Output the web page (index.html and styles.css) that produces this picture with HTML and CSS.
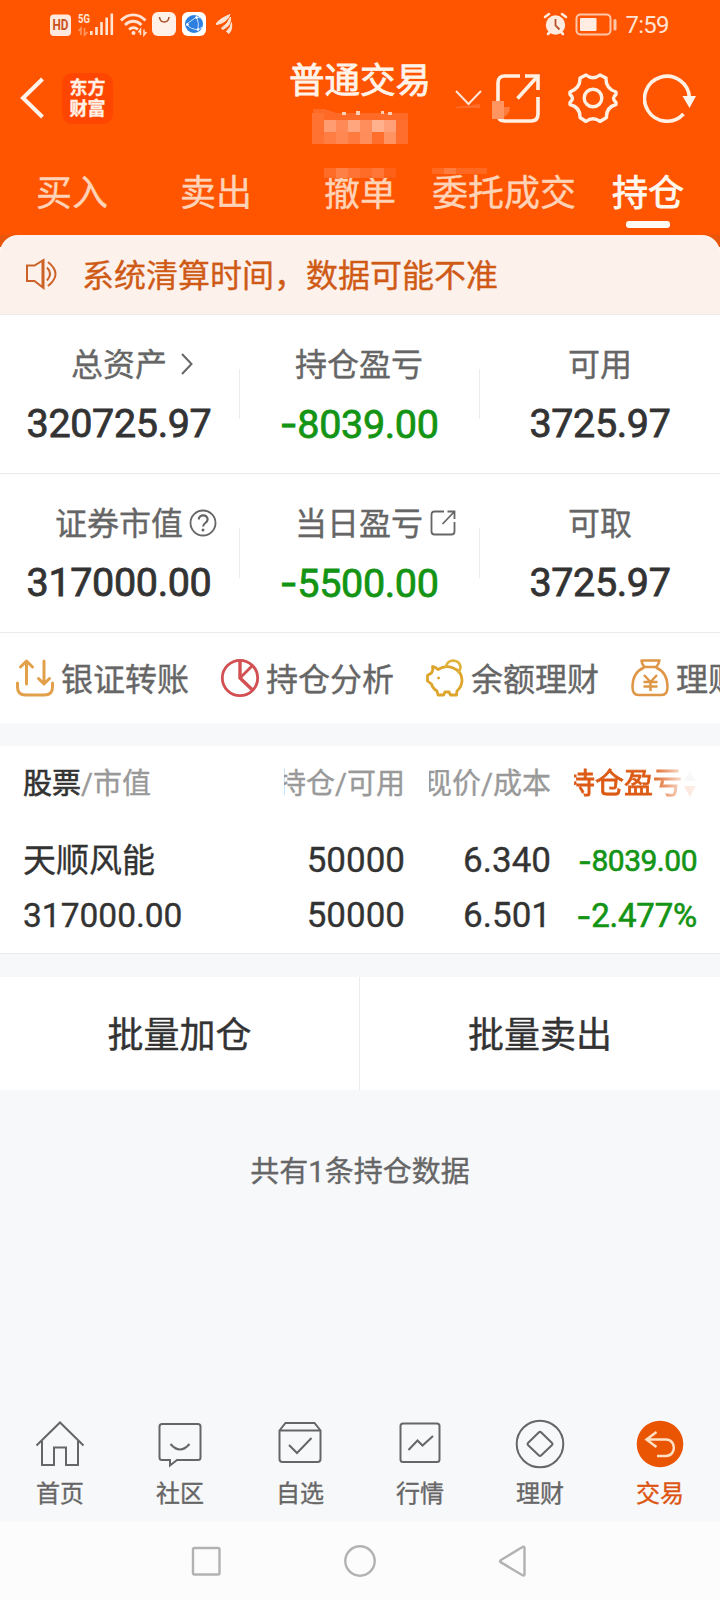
FILE: index.html
```html
<!DOCTYPE html>
<html lang="zh-CN">
<head>
  <meta charset="UTF-8" />
  <meta name="viewport" content="width=device-width, initial-scale=1.0"/>
  <title>普通交易 - 持仓</title>
  <link rel="stylesheet" href="styles.css">
</head>
<body>
  <div class="top">
    <!-- Phone status bar -->
    <div class="status">
      <svg class="status-left" width="190" height="26" viewBox="48 11 190 26">
        <rect x="50" y="14.500" width="21" height="21.500" rx="4" fill="#ffe9dd"/>
        <text x="60.500" y="30" class="hd" textLength="16" lengthAdjust="spacingAndGlyphs">HD</text>
        <text x="78" y="23" class="net" textLength="12" lengthAdjust="spacingAndGlyphs">5G</text>
        <path d="M81 35v-7l-2.500 3M84.500 28v7l3-3" stroke="#ff9a68" stroke-width="1.500" fill="none"/>
        <path d="M91.300 31v4M96.500 27v8M101.500 22v13M106.700 17.500v17.500M111.800 13.500v21.500" stroke="#ffe3d3" stroke-width="2.600"/>
        <g fill="none" stroke="#ffe3d3" stroke-width="2.800">
          <path d="M121 20.500c7-7.500 17.500-7.500 24.500 0"/>
          <path d="M125 25c5-5 11.500-5 16.500 0"/>
          <path d="M129 29.500c3-2.500 6-2.500 9 0"/>
        </g>
        <circle cx="133.500" cy="33" r="2" fill="#ffe3d3"/>
        <path d="M140.500 35v-5.500l-2 3M144 29.500v5.500l2.500-3" stroke="#ffe3d3" stroke-width="1.500" fill="none"/>
        <rect x="152" y="12" width="24" height="24" rx="6" fill="#fff0e8"/>
        <path d="M159.500 17c.5 6.500 9 6.500 9.500 0" stroke="#a8502c" stroke-width="1.500" fill="none"/>
        <rect x="182" y="12" width="24" height="24" rx="6" fill="#fff"/>
        <circle cx="194" cy="24" r="9" fill="#2f7fe0"/>
        <path d="M186 24.500l10.500-7.500M186 24.500q5 5 12 5.500M196.500 17q3 6 1.500 13M198 30l4-3M196.500 17l4 1" stroke="#c8e2ff" stroke-width="1" fill="none"/>
        <circle cx="196.500" cy="17.500" r="1.300" fill="#fff"/><circle cx="198" cy="29.500" r="1.300" fill="#fff"/><circle cx="187.500" cy="24.500" r="1.300" fill="#fff"/>
        <path d="M216 24q3-5 14-9.500-3 8-13 10zM221.500 28q6.500-4 9-11 1 9-8 12.500zM226.500 31.500q4.500-4 5-9 1 7-2.500 11z" fill="#ffe3d3" stroke="#ffe3d3" stroke-width="1"/>
      </svg>
      <svg class="status-right" width="130" height="26" viewBox="542 11 130 26">
        <circle cx="555.500" cy="25" r="9.700" fill="#ffebe0"/>
        <path d="M545 17l4-3M566 17l-4-3M548 34l2-2M563 34l-2-2" stroke="#ffebe0" stroke-width="2.600" stroke-linecap="round"/>
        <path d="M555.500 19v6.500l4 4" stroke="#b5532a" stroke-width="1.800" fill="none"/>
        <rect x="576.500" y="14.500" width="34" height="20" rx="4" fill="none" stroke="#ffc7a8" stroke-width="2"/>
        <rect x="580" y="18" width="16.500" height="13" rx="1" fill="#ffede4"/>
        <path d="M615 20.500v8.500" stroke="#ffc7a8" stroke-width="3" stroke-linecap="round"/>
        <text x="625.500" y="32.500" class="clock" textLength="44">7:59</text>
      </svg>
    </div>

    <header class="header">
      <div class="header-left">
        <svg width="24" height="42" viewBox="0 0 24 42"><path d="M22.500 2L3 21l19.500 19" fill="none" stroke="#fff4ec" stroke-width="4"/></svg>
        <div class="logo">东方<br>财富</div>
      </div>
      <div class="title">
        <h1>普通交易</h1>
        <!-- masked account name -->
        <svg class="mosaic" width="96" height="36" viewBox="0 0 96 36" shape-rendering="crispEdges">
          <path d="M1 1h11l12 4h72v7H1z" fill="#ff6a26"/>
          <path d="M30 4h4v3h-4zM44 3h4v4h-4zM69 3h3v3h-3zM76 4h4v3h-4z" fill="#ffd0b4"/>
          <rect x="0" y="5" width="12" height="31" fill="#ff7232"/>
          <rect x="12" y="12" width="84" height="24" fill="#ff6e2c"/>
          <rect x="12" y="12" width="12" height="12" fill="#ff9c72"/>
          <rect x="24" y="12" width="12" height="12" fill="#ff8a58"/>
          <rect x="36" y="12" width="12" height="12" fill="#ffa67e"/>
          <rect x="48" y="12" width="12" height="12" fill="#ff8e5c"/>
          <rect x="60" y="12" width="12" height="12" fill="#ffb08c"/>
          <rect x="72" y="12" width="12" height="12" fill="#ffa078"/>
          <rect x="12" y="24" width="12" height="12" fill="#ff7c42"/>
          <rect x="24" y="24" width="12" height="12" fill="#ff8852"/>
          <rect x="36" y="24" width="12" height="12" fill="#ff7a3e"/>
          <rect x="48" y="24" width="12" height="12" fill="#ff8d5c"/>
          <rect x="72" y="24" width="12" height="12" fill="#ff9462"/>
        </svg>
      </div>
      <div class="header-right">
        <svg class="chevron" width="27" height="20" viewBox="0 0 27 20"><path d="M1 1l12.500 13L26 1" fill="none" stroke="#ffe6d6" stroke-width="2"/><path d="M1 17l24-3v4H1z" fill="#ff6c2a"/></svg>
        <svg class="share" width="50" height="50" viewBox="0 0 50 50">
          <g fill="none" stroke="#fff0e4" stroke-width="3.600">
            <path d="M29 3H14Q7 3 7 10v31q0 7 7 7h26q7 0 7-7V24"/>
            <path d="M34 3h13v14M46 4L26.500 25.500"/>
          </g>
          <rect x="1" y="28" width="12" height="18" fill="#ff9560"/>
          <path d="M13 34h6q0 7-6 10z" fill="#ff7c3c"/>
        </svg>
        <svg class="gear" width="50" height="50" viewBox="0 0 50 50">
          <g fill="none" stroke="#fff0e4" stroke-width="3.400" stroke-linejoin="round">
            <path d="M18 2q7 5.500 14 0l6 3q-.5 10.500 10 14v2.500q-5 3.500 0 8v2q-10 3-9.500 13l-6.500 4q-7-5.500-14 0l-6-4q.5-10-10-13v-2q5-4.500 0-8V19q10.500-4 10-14z"/>
            <circle cx="25" cy="25" r="8.800"/>
          </g>
        </svg>
        <svg class="refresh" width="54" height="50" viewBox="0 0 54 50">
          <path d="M40.500 41A22.500 22.500 0 1 1 46.500 25" fill="none" stroke="#fff0e4" stroke-width="3.600"/>
          <path d="M39.500 23h13.500l-6.500 12z" fill="#fff4ec"/>
        </svg>
      </div>
    </header>

    <nav class="tabs">
      <span>买入</span>
      <span>卖出</span>
      <span>撤单</span>
      <span>委托成交</span>
      <span class="active">持仓</span>
      <i class="smudge smudge-a"></i>
      <i class="smudge smudge-b"></i>
    </nav>
  </div>

  <div class="notice-wrap">
    <div class="notice">
      <svg width="34" height="34" viewBox="0 0 34 34" fill="none" stroke="#cc6228" stroke-width="2">
        <path d="M2 9.500h7.500L18.500 4v28L9.500 25H2zM17.500 4v27"/>
        <path d="M22 11.500q6 6 0 13M23 6q15 12 0 24"/>
      </svg>
      <span>系统清算时间，数据可能不准</span>
    </div>
  </div>

  <section class="stats">
    <div class="stat">
      <div class="label">总资产<svg class="arrow" width="14" height="24" viewBox="0 0 14 24"><path d="M2 2l9.500 10L2 22" fill="none" stroke="#666" stroke-width="2"/></svg></div>
      <div class="value">320725.97</div>
    </div>
    <div class="stat">
      <div class="label">持仓盈亏</div>
      <div class="value green"><b>-</b>8039.00</div>
    </div>
    <div class="stat">
      <div class="label">可用</div>
      <div class="value">3725.97</div>
    </div>
  </section>
  <section class="stats">
    <div class="stat">
      <div class="label">证券市值<svg class="help" width="28" height="28" viewBox="0 0 28 28"><circle cx="14" cy="14" r="12.500" fill="none" stroke="#666" stroke-width="1.800"/><path d="M9.800 10.500c0-5.500 8.800-5.500 8.800 0 0 3.500-4.500 3.500-4.500 7" fill="none" stroke="#666" stroke-width="2.200"/><circle cx="14" cy="21" r="1.500" fill="#666"/></svg></div>
      <div class="value">317000.00</div>
    </div>
    <div class="stat">
      <div class="label">当日盈亏<svg class="open" width="26" height="26" viewBox="0 0 26 26" fill="none" stroke="#666" stroke-width="1.800"><path d="M14 1.500H4.500Q1.500 1.500 1.500 4.500v17q0 3 3 3h17q3 0 3-3V12"/><path d="M17.500 1.500h7V9M24 2L12.500 14"/></svg></div>
      <div class="value green"><b>-</b>5500.00</div>
    </div>
    <div class="stat">
      <div class="label">可取</div>
      <div class="value">3725.97</div>
    </div>
  </section>

  <div class="links">
    <div class="link">
      <svg width="40" height="40" viewBox="0 0 40 40" fill="none" stroke="#e2a04a" stroke-width="3" stroke-linecap="round" stroke-linejoin="round">
        <path d="M2.500 25v4q0 8 8 8h19q8 0 8-8v-4"/><path d="M11.500 26V3M5.500 9l6-6 6 6M29 3v23M23.500 20.500l5.500 5.500 5.500-5.500"/>
      </svg>
      <span>银证转账</span>
    </div>
    <div class="link">
      <svg width="40" height="40" viewBox="0 0 40 40" fill="none" stroke="#d25052" stroke-width="2.800">
        <circle cx="20" cy="20" r="17.700"/><path d="M20 2.500V20L32 31.500" stroke-width="3.400"/><path d="M20 20L32 8"/>
      </svg>
      <span>持仓分析</span>
    </div>
    <div class="link">
      <svg width="40" height="40" viewBox="0 0 40 40" fill="none" stroke="#dda52c" stroke-width="2.800" stroke-linejoin="round" stroke-linecap="round">
        <path d="M7.500 8.500q3 .5 5.500 3Q20 7 27 9.500q10 3.500 10 12.500 0 6.500-5 11l-.5 4h-6l-1.500-3h-4l-1.500 3h-5.500l-1-4q-4-2-5.500-7L2.500 23v-5.500l4-2.500q2-3 1-6.500z"/>
        <path d="M21 8.500c1.500-8 13-7.500 14.500 0 0 2.500-.5 4-2 5.500" stroke="#dfb33c"/><circle cx="13.500" cy="20" r="1" fill="#dda52c" stroke-width="1"/>
      </svg>
      <span>余额理财</span>
    </div>
    <div class="link">
      <svg width="40" height="40" viewBox="0 0 40 40" fill="none" stroke="#df9646" stroke-width="2.500" stroke-linejoin="round">
        <path d="M11.500 2.500h18q-1 4.500-3.500 6.500H15q-3-2-3.500-6.500zM14 9.500C6 13 2.500 20 2.500 29q0 8 6 8h23q6 0 6-8C37.500 20 34 13 26 9.500"/>
        <path d="M14 17l6.500 7 6.500-7M13.500 24h14M13.500 28.500h14M20.500 24v9"/>
      </svg>
      <span>理财产品</span>
    </div>
  </div>

  <section class="holdings">
    <div class="row head">
      <div class="c1"><strong>股票</strong>/市值</div>
      <div class="c2"><span>持仓/可用</span></div>
      <div class="c3"><span>现价/成本</span></div>
      <div class="c4"><span>持仓盈亏</span><svg width="14" height="26" viewBox="0 0 14 26"><path d="M1 10L7 0l6 10z" fill="#ccc"/><path d="M1 15h12L7 26z" fill="#e86018"/></svg></div>
    </div>
    <div class="row">
      <div class="c1 name">天顺风能</div>
      <div class="c2">50000</div>
      <div class="c3">6.340</div>
      <div class="c4 profit"><b>-</b>8039.00</div>
    </div>
    <div class="row last">
      <div class="c1 market">317000.00</div>
      <div class="c2">50000</div>
      <div class="c3">6.501</div>
      <div class="c4 rate"><b>-</b>2.477%</div>
    </div>
  </section>

  <div class="batch">
    <div>批量加仓</div>
    <div>批量卖出</div>
  </div>

  <p class="summary">共有1条持仓数据</p>

  <nav class="bottom">
    <div class="item">
      <svg width="50" height="50" viewBox="0 0 50 50"><path d="M1.500 26.500L25 3.500l23.500 23M7 22v24h12V28.500h12V46h12V22"/></svg>
      <span>首页</span>
    </div>
    <div class="item">
      <svg width="50" height="50" viewBox="0 0 50 50"><path d="M7 5h36q2.500 0 2.500 2.500v31Q45.500 41 43 41H22l-7 5.500V41H7q-2.500 0-2.500-2.500v-31Q4.500 5 7 5z"/><path d="M15.500 25q9.500 11 19 0"/></svg>
      <span>社区</span>
    </div>
    <div class="item">
      <svg width="50" height="50" viewBox="0 0 50 50"><path d="M4.500 11.500L10.500 4h29l6 7.500V40q0 3-3 3h-35q-3 0-3-3zM4.500 11.500h41"/><path d="M14 26l8 8 14.500-15"/></svg>
      <span>自选</span>
    </div>
    <div class="item">
      <svg width="50" height="50" viewBox="0 0 50 50"><rect x="5.500" y="4.500" width="39" height="38.500" rx="2.500"/><path d="M13.500 31l9-9.500 5 5L38 17" /></svg>
      <span>行情</span>
    </div>
    <div class="item">
      <svg width="50" height="50" viewBox="0 0 50 50"><circle cx="25" cy="25" r="23.300"/><path d="M23.700 13.500q1.300-1.300 2.600 0l10.500 10.200q1.300 1.300 0 2.600l-10.500 10q-1.300 1.300-2.600 0l-10.500-10q-1.300-1.300 0-2.600z"/></svg>
      <span>理财</span>
    </div>
    <div class="item active">
      <svg width="50" height="50" viewBox="0 0 50 50"><circle cx="25" cy="25" r="23.300" class="disc"/><path d="M21.500 13L11.500 20.500l10 7.500M12 20.500h19c10.500 0 10.500 16.500 0 16.500h-9"/></svg>
      <span>交易</span>
    </div>
  </nav>

  <div class="system">
    <svg width="32" height="32" viewBox="0 0 32 32"><rect x="3" y="3" width="26.500" height="26.500" rx="1.500"/></svg>
    <svg width="32" height="32" viewBox="0 0 32 32"><circle cx="16" cy="16" r="14.700"/></svg>
    <svg width="32" height="32" viewBox="0 0 32 32"><path d="M3 15q-2 1.200 0 2.400l21.500 12.800q2 1 2-1.200v-26q0-2-2-1z"/></svg>
  </div>
</body>
</html>
```

FILE: styles.css
```css
* {
  box-sizing: border-box;
}
body {
  margin: 0;
  width: 720px;
  height: 1600px;
  overflow: hidden;
  display: flex;
  flex-direction: column;
  font-family: Roboto, "Noto Sans CJK SC", sans-serif;
  background-color: #f7f8fa;
  color: #333;
  -webkit-text-stroke: 0.35px currentColor;
}
svg {
  display: block;
  flex: none;
}

/* orange header */
.top {
  height: 235px;
  background-color: #ff5500;
}
.status {
  height: 48px;
  padding: 11px 48px 0;
  display: flex;
  justify-content: space-between;
}
.status text {
  -webkit-text-stroke: 0;
}
.hd {
  font-size: 15px;
  font-weight: bold;
  fill: #c8501c;
  text-anchor: middle;
}
.net {
  font-size: 13px;
  font-weight: bold;
  fill: #ffe3d3;
}
.clock {
  font-size: 24px;
  fill: #ffe3d3;
}
.header {
  height: 100px;
  display: grid;
  grid-template-columns: 289px 142px 289px;
}
.header-left {
  display: flex;
  align-items: center;
  gap: 18px;
  padding-left: 20px;
}
.logo {
  width: 51px;
  height: 51px;
  border-radius: 10px;
  background-color: #ff4600;
  color: #fff0e6;
  font-family: "Noto Sans CJK SC", sans-serif;
  font-size: 18px;
  font-weight: bold;
  line-height: 21px;
  text-align: center;
  padding-top: 3px;
}
.title {
  padding-top: 15px;
}
.title h1 {
  margin: 0;
  font-size: 35.5px;
  font-weight: 400;
  line-height: 36px;
  color: #fff3ea;
  white-space: nowrap;
  -webkit-text-stroke-width: 0.8px;
}
.mosaic {
  margin: 9px auto 0 23px;
}
.header-right {
  display: flex;
  align-items: center;
  padding-left: 24px;
}
.chevron {
  margin-top: 4px;
}
.share {
  margin-left: 9px;
}
.gear {
  margin-left: 27px;
}
.refresh {
  margin-left: 25px;
}
.tabs {
  position: relative;
  height: 87px;
  display: grid;
  grid-template-columns: repeat(5, 1fr);
  text-align: center;
  font-size: 36px;
  line-height: 36px;
  color: #ffd3b8;
  padding-top: 28px;
}
.tabs .active {
  color: #fff8ef;
  -webkit-text-stroke-width: 0.8px;
}
.tabs .active::after {
  content: "";
  display: block;
  width: 44px;
  height: 7px;
  margin: 9px auto 0;
  border-radius: 3px;
  background-color: #fffaf2;
}
.smudge {
  position: absolute;
  top: 20px;
  height: 10px;
  background-color: #ff7434;
}
.smudge-a {
  left: 324px;
  width: 72px;
  background: linear-gradient(90deg, #ff6c28 12px, #ff8046 12px 24px, #ff7434 24px 36px, #ff6c28 36px 48px, #ff7636 48px 60px, #ff6018 60px);
}
.smudge-b {
  left: 432px;
  width: 55px;
  height: 6px;
  background: linear-gradient(90deg, #ff6922 12px, #ff7c3e 12px 24px, #ff6820 24px);
}

/* notice */
.notice-wrap {
  background: linear-gradient(#e8560c 12px, #fff 12px);
}
.notice {
  height: 80px;
  padding: 0 25px 3px;
  display: flex;
  align-items: center;
  gap: 23px;
  border-radius: 18px 18px 0 0;
  border-bottom: 1px solid #ecebed;
  background-color: #fdf1eb;
  font-size: 32px;
  color: #cf5a16;
}

/* account figures */
.stats {
  height: 159px;
  display: flex;
  background-color: #fff;
  border-bottom: 1px solid #ebebed;
}
.stat {
  width: 240px;
  padding-top: 34px;
  padding-right: 2px;
  display: flex;
  flex-direction: column;
  align-items: center;
  background: linear-gradient(#ececee, #ececee) no-repeat 239px 54px / 1px 50px;
}
.stat:last-child {
  padding-right: 0;
  background: none;
}
.label {
  display: flex;
  align-items: center;
  height: 32px;
  font-size: 32px;
  line-height: 32px;
  color: #666;
}
.label svg {
  margin-top: -2px;
}
.arrow {
  margin-left: 13px;
  margin-right: -27px;
}
.help {
  margin-left: 6px;
  margin-right: -34px;
}
.open {
  margin-left: 7px;
  margin-right: -33px;
}
.value {
  margin-top: 23px;
  font-size: 39.5px;
  line-height: 40px;
  letter-spacing: -0.35px;
  -webkit-text-stroke-width: 0.8px;
}
b {
  font-family: Inter, sans-serif;
  font-weight: inherit;
}
.green,
.profit,
.rate {
  color: #149414;
}

/* shortcut links */
.links {
  height: 91px;
  padding-left: 15px;
  display: flex;
  align-items: center;
  gap: 31px;
  overflow: hidden;
  background-color: #fff;
  border-bottom: 1px solid #fbfbfc;
}
.link {
  display: flex;
  align-items: center;
  gap: 6px;
  font-size: 32px;
  color: #666;
  white-space: nowrap;
}
.link span {
  margin-top: -2px;
}

/* holdings table */
.holdings {
  height: 208px;
  margin-top: 22px;
  background-color: #fff;
  border-bottom: 1px solid #ebebed;
}
.row {
  display: grid;
  grid-template-columns: 260px 121px 122px 123px;
  padding-left: 24px;
  height: 55px;
  align-items: center;
  font-size: 35px;
  line-height: 54px;
  white-space: nowrap;
}
.row > div {
  display: flex;
  justify-content: flex-end;
  align-items: center;
}
.row > .c1 {
  justify-content: flex-start;
  margin-left: -1px;
}
.c3,
.c4 {
  margin-left: 24px;
  margin-right: -24px;
}
.row > .c4 {
  margin-left: 47px;
  margin-right: -47px;
}
.head {
  height: 87px;
  padding-bottom: 12px;
  font-size: 29px;
  line-height: 40px;
  color: #999;
}
.head > div {
  overflow: hidden;
}
.head strong {
  font-weight: 400;
  color: #333;
  -webkit-text-stroke-width: 0.6px;
}
.head .c4 {
  color: #dc5a14;
  -webkit-text-stroke-width: 0.8px;
  -webkit-mask-image: linear-gradient(90deg, #000 76px, rgba(0, 0, 0, 0.15) 110px, rgba(0, 0, 0, 0.1));
  mask-image: linear-gradient(90deg, #000 76px, rgba(0, 0, 0, 0.15) 110px, rgba(0, 0, 0, 0.1));
}
.head svg {
  margin-left: 1px;
}
.name {
  font-size: 33px;
}
.market {
  font-size: 33.5px;
}
.profit {
  font-size: 30px;
  letter-spacing: -0.5px;
  -webkit-text-stroke-width: 0.6px;
}
.rate {
  font-size: 33px;
  letter-spacing: -0.2px;
  -webkit-text-stroke-width: 0.6px;
}

.batch {
  display: flex;
  height: 113px;
  margin-top: 23px;
  background-color: #fff;
}
.batch div {
  width: 360px;
  text-align: center;
  font-size: 36px;
  line-height: 119px;
}
.batch div:first-child {
  border-right: 1px solid #ececee;
}
.summary {
  margin: 62px 0 0;
  text-align: center;
  font-size: 29px;
  line-height: 40px;
  color: #666;
}

/* bottom navigation */
.bottom {
  margin-top: auto;
  height: 103px;
  display: flex;
}
.item {
  flex: 1;
  display: flex;
  flex-direction: column;
  align-items: center;
  font-size: 24px;
  line-height: 30px;
  color: #666;
}
.item svg {
  fill: none;
  stroke: #666;
  stroke-width: 2;
  margin-bottom: 10px;
}
.item.active {
  color: #dd5410;
}
.item.active svg {
  stroke: #ffe0c4;
  stroke-width: 2.5;
}
.item .disc {
  fill: #ea5504;
  stroke: none;
}
.system {
  height: 78px;
  display: flex;
  justify-content: center;
  align-items: center;
  gap: 122px;
  background-color: #fcfcfc;
}
.system svg {
  fill: none;
  stroke: #b2b2b2;
  stroke-width: 2.4;
}
```
